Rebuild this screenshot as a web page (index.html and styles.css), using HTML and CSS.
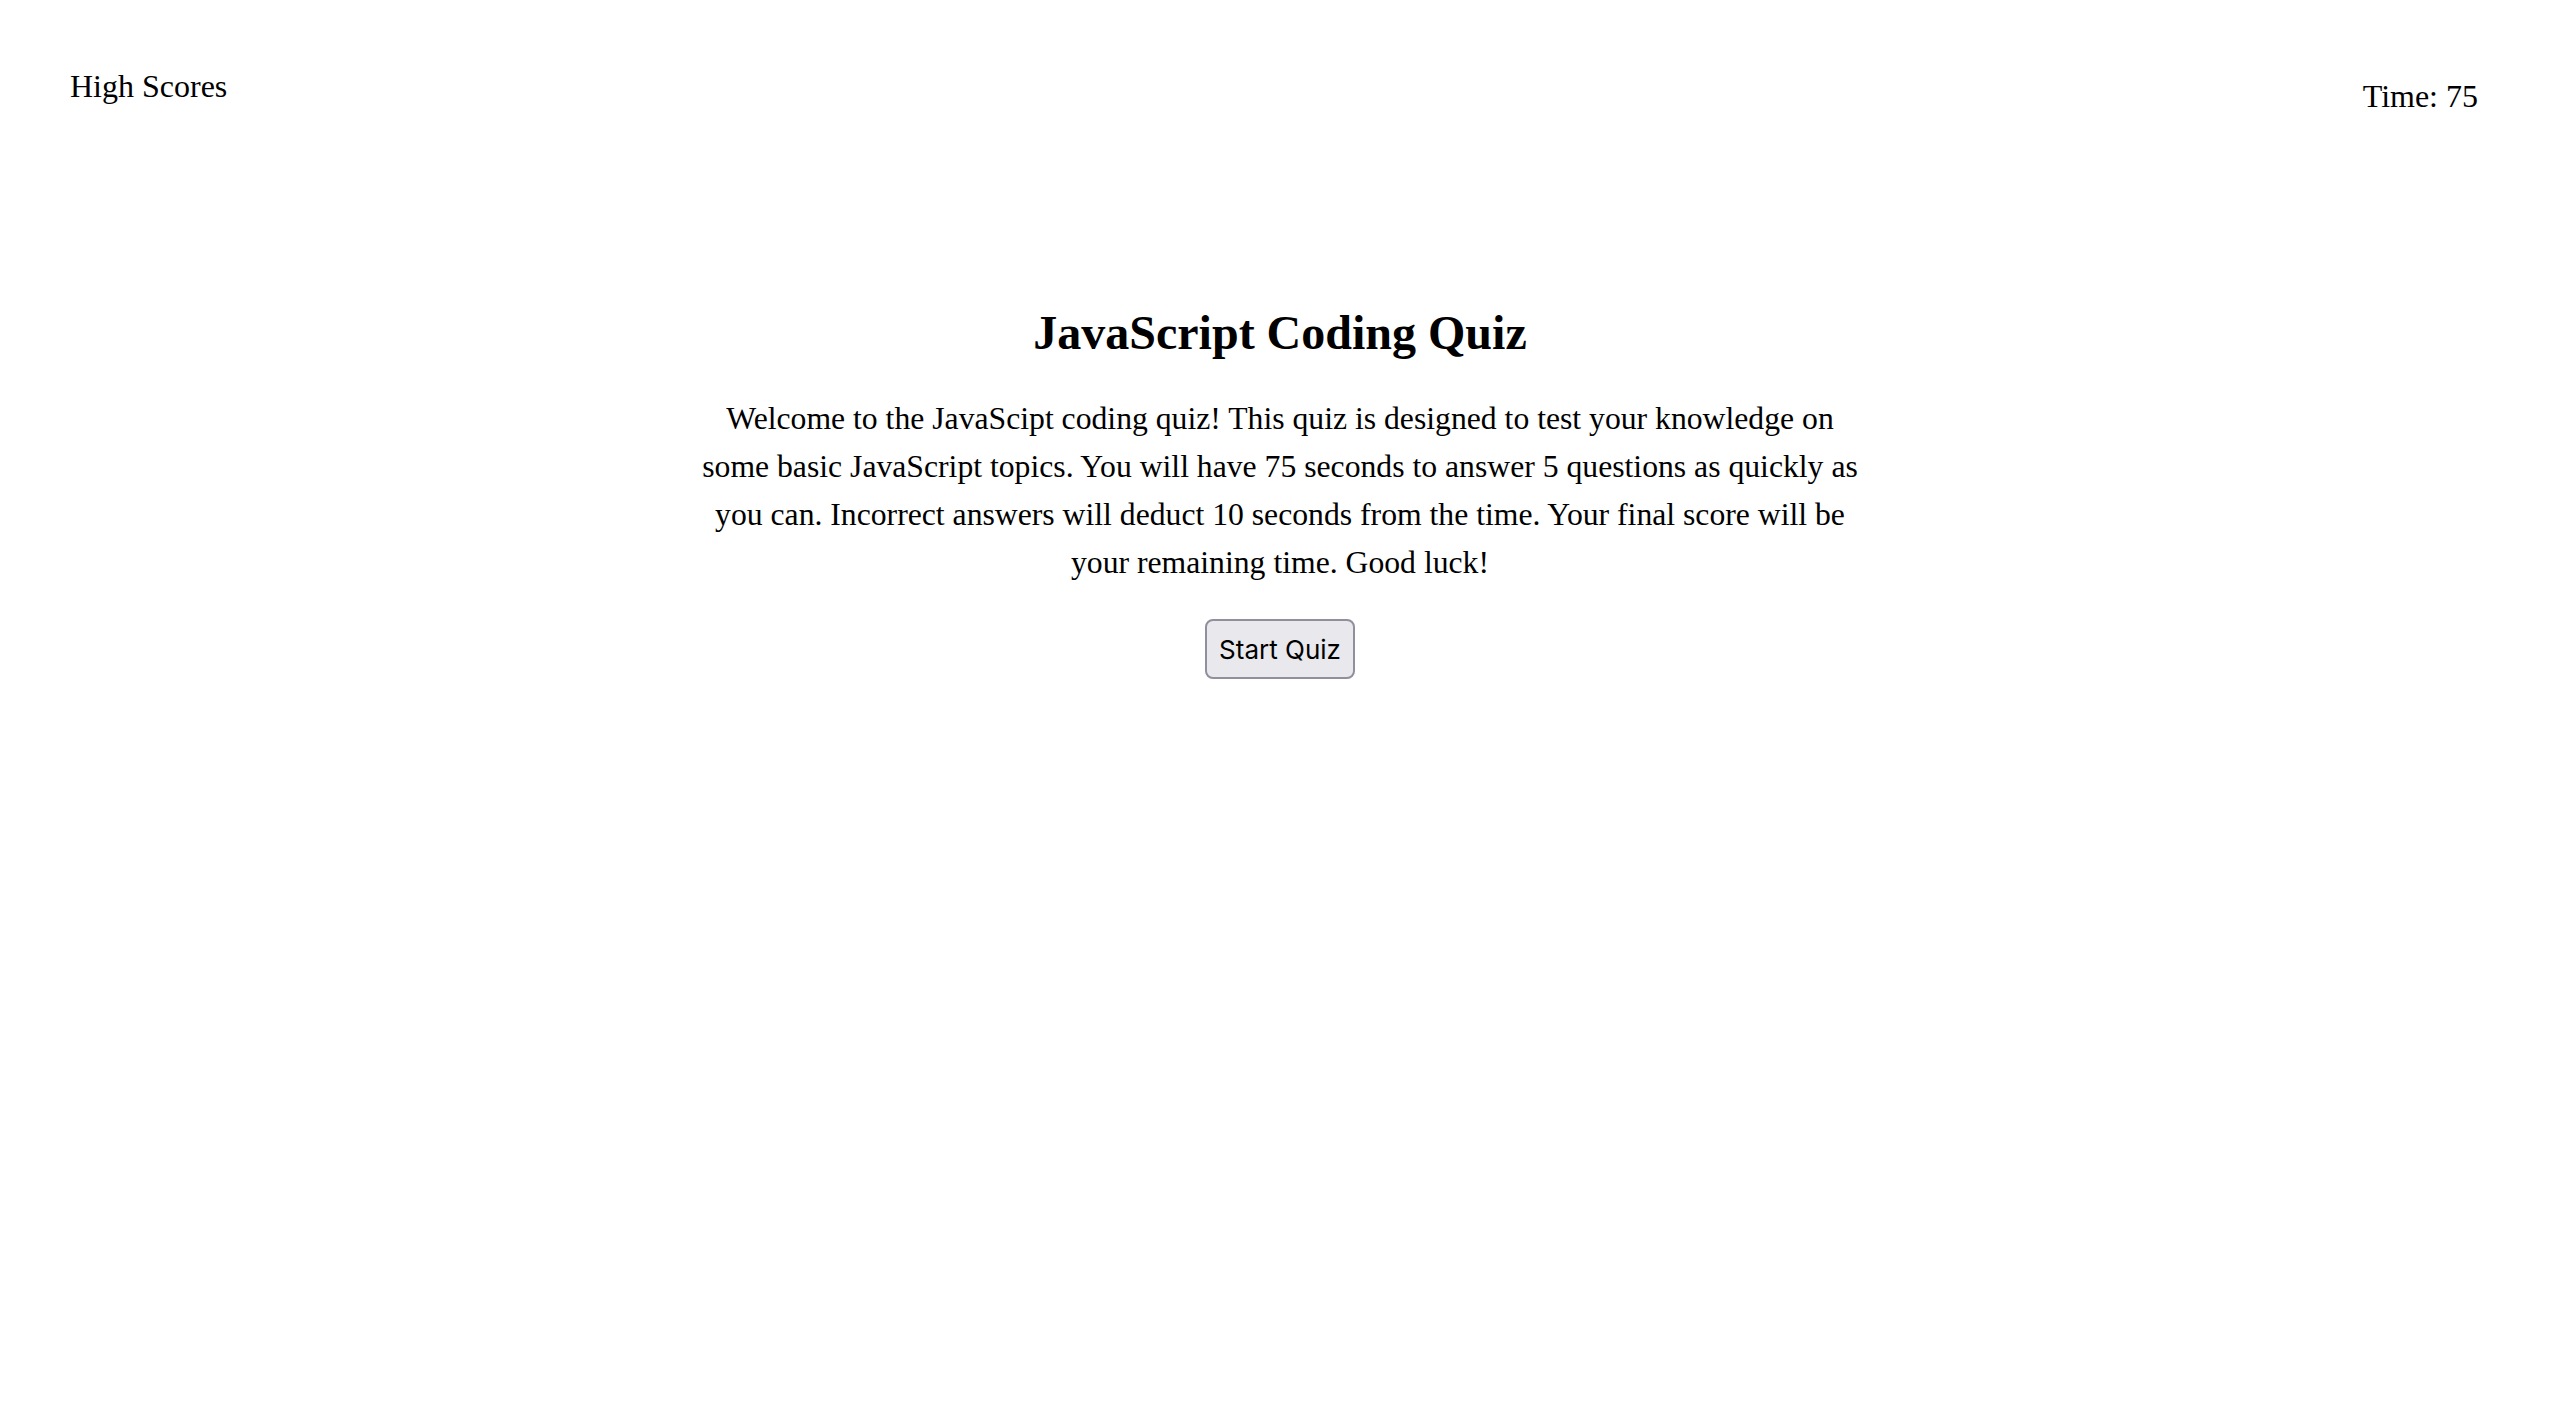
FILE: index.html
```html
<!DOCTYPE html>
<html lang="en">
<head>
<meta charset="utf-8">
<title>JavaScript Coding Quiz</title>
<link rel="stylesheet" href="styles.css">
</head>
<body>
<header class="top-bar">
  <a class="high-scores">High Scores</a>
  <div class="timer">Time: 75</div>
</header>
<main class="intro">
  <h1 class="title">JavaScript Coding Quiz</h1>
  <p class="desc">Welcome to the JavaScipt coding quiz! This quiz is designed to test your knowledge on some basic JavaScript topics. You will have 75 seconds to answer 5 questions as quickly as you can. Incorrect answers will deduct 10 seconds from the time. Your final score will be your remaining time. Good luck!</p>
  <button class="start-btn">Start Quiz</button>
</main>
</body>
</html>
```

FILE: styles.css
```css
html, body {
  margin: 0;
  padding: 0;
  background: #ffffff;
  color: #000000;
  font-family: "Liberation Serif", "Times New Roman", serif;
}

.top-bar {
  display: flex;
  justify-content: space-between;
  align-items: flex-start;
  padding: 68px 82px 0 70px;
}

.high-scores {
  font-size: 32px;
  line-height: 37px;
}

.timer {
  font-size: 32px;
  line-height: 37px;
  margin-top: 10px;
}

.intro {
  display: flex;
  flex-direction: column;
  align-items: center;
  margin-top: 189px;
}

.title {
  margin: 0;
  font-size: 48px;
  line-height: 58px;
  font-weight: bold;
}

.desc {
  max-width: 1172px;
  margin: 33px 0 0 0;
  font-size: 31.7px;
  line-height: 48px;
  text-align: center;
}

.start-btn {
  margin-top: 32px;
  font-family: Inter, "Noto Sans", sans-serif;
  font-size: 26px;
  color: #000;
  background: #e9e8ed;
  border: 2px solid #8f8f9d;
  border-radius: 8px;
  height: 60px;
  padding: 0 12px;
}
```
